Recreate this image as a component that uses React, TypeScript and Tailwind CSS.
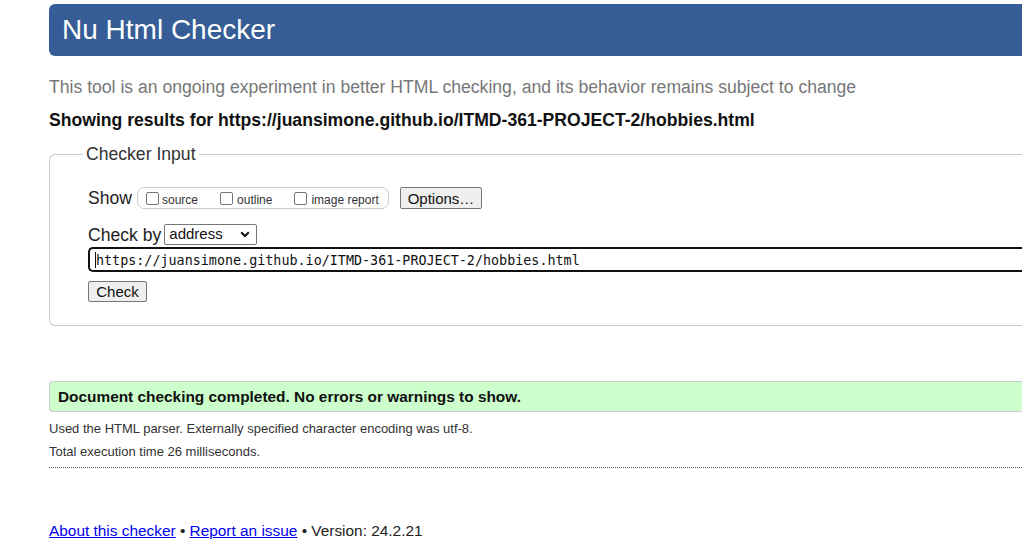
import React from "react";

function Checkbox() {
  return (
    <span className="inline-block w-[13px] h-[13px] border border-[#767676] rounded-[2px] bg-white shrink-0" />
  );
}

export default function App() {
  return (
    <div className="w-[1022px] h-[560px] overflow-hidden bg-white font-['Liberation_Sans',Arial,sans-serif] text-[#222]">
      <div className="pl-[49px] pt-[4px]">
        <h1 className="h-[52px] bg-[#365d95] rounded-l-[6px] text-white text-[28px] pl-[13px] flex items-center leading-none">
          Nu Html Checker
        </h1>
        <p className="mt-[20px] text-[17.6px] leading-[22px] text-[#777]">
          This tool is an ongoing experiment in better HTML checking, and its behavior remains subject to change
        </p>
        <p className="mt-[11px] text-[17.6px] leading-[22px] font-bold text-[#111]">
          Showing results for https://juansimone.github.io/ITMD-361-PROJECT-2/hobbies.html
        </p>
        <fieldset className="mt-[12px] border border-r-0 border-[#ccc] rounded-l-[6px] pl-[38px] pb-[21px]">
          <legend className="-ml-[5px] px-[3px] text-[17.6px] leading-[22px] text-[#333]">Checker Input</legend>
          <div className="mt-[22px] flex items-center h-[22px]">
            <span className="text-[17.6px] text-[#222]">Show</span>
            <div className="ml-[5px] w-[252px] h-[22px] border border-[#ccc] rounded-[7px] flex items-center text-[12px] text-[#333]">
              <span className="ml-[8px] flex items-center gap-[3px]">
                <Checkbox />
                <span className="mt-[3px]">source</span>
              </span>
              <span className="ml-[22px] flex items-center gap-[4px]">
                <Checkbox />
                <span className="mt-[3px]">outline</span>
              </span>
              <span className="ml-[22px] flex items-center gap-[4px]">
                <Checkbox />
                <span className="mt-[3px]">image report</span>
              </span>
            </div>
            <button className="ml-[11px] w-[82px] h-[22px] bg-[#efefef] border border-[#767676] rounded-[2px] text-[15px] text-[#111] leading-none">
              Options…
            </button>
          </div>
          <div className="mt-[15px] flex items-center h-[21px]">
            <span className="text-[17.6px] text-[#222] mt-[1px]">Check by</span>
            <div className="ml-[3px] w-[93px] h-[21px] border border-[#767676] rounded-[2px] flex items-center justify-between pl-[4px] pr-[6px] text-[15px] text-[#111]">
              <span>address</span>
              <svg width="10" height="7" viewBox="0 0 10 7">
                <path d="M1.2 1.2 L5 5 L8.8 1.2" fill="none" stroke="#111" strokeWidth="2" />
              </svg>
            </div>
          </div>
          <div className="mt-[2px] h-[25px] border-2 border-r-0 border-[#111] rounded-l-[5px] flex items-center pl-[6px] pt-[3px] font-['DejaVu_Sans_Mono',monospace] text-[13.4px] text-[#111]">
            <span className="w-px h-[16px] bg-[#111] -ml-[1px] -mt-[2px]" />
            <span className="whitespace-nowrap">https://juansimone.github.io/ITMD-361-PROJECT-2/hobbies.html</span>
          </div>
          <button className="mt-[9px] w-[59px] h-[21px] bg-[#efefef] border border-[#767676] rounded-[2px] text-[15px] text-[#111] leading-none">
            Check
          </button>
        </fieldset>
        <div className="mt-[55px] h-[31px] bg-[#ccffcc] border border-r-0 border-[#ccc] rounded-l-[4px] flex items-center pl-[8px] text-[15.4px] font-bold text-[#111]">
          Document checking completed. No errors or warnings to show.
        </div>
        <p className="mt-[8px] text-[13px] leading-[18px] text-[#333]">
          Used the HTML parser. Externally specified character encoding was utf-8.
        </p>
        <p className="mt-[5px] text-[13px] leading-[18px] text-[#333]">Total execution time 26 milliseconds.</p>
        <div className="mt-[6px] border-b border-dotted border-[#555]" />
        <p className="mt-[53px] text-[15.4px] leading-[20px] text-[#222]">
          <a href="#" className="text-[#0000ee] underline">About this checker</a>
          {" • "}
          <a href="#" className="text-[#0000ee] underline">Report an issue</a>
          {" • Version: 24.2.21"}
        </p>
      </div>
    </div>
  );
}
